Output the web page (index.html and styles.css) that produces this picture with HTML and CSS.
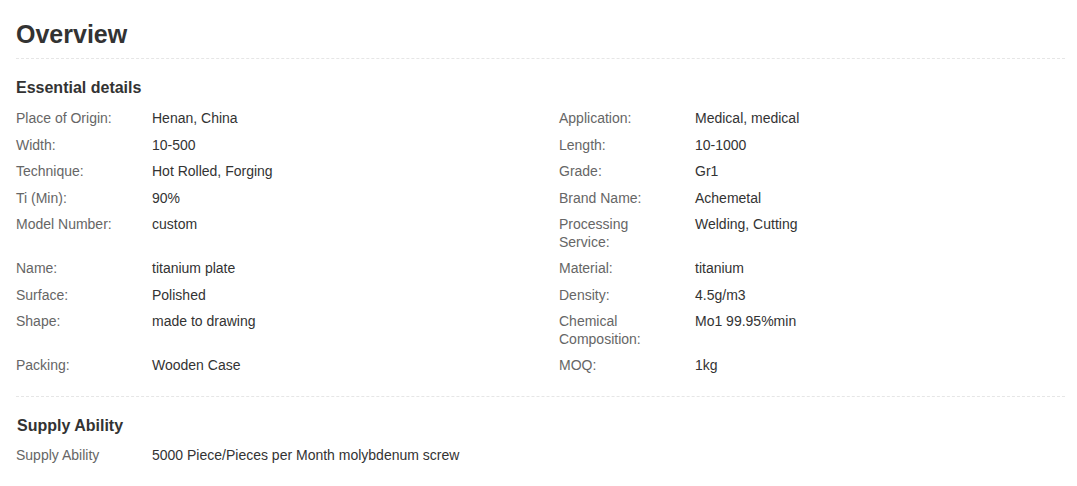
FILE: index.html
```html
<!DOCTYPE html>
<html lang="en">
<head>
<meta charset="utf-8">
<title>Overview</title>
<link rel="stylesheet" href="styles.css">
</head>
<body>
<div class="page">
  <h2 class="title">Overview</h2>
  <section class="block">
    <h3 class="block-title">Essential details</h3>
    <div class="grid">
      <div class="row"><div class="label">Place of Origin:</div><div class="value">Henan, China</div></div>
      <div class="row"><div class="label">Application:</div><div class="value">Medical, medical</div></div>
      <div class="row"><div class="label">Width:</div><div class="value">10-500</div></div>
      <div class="row"><div class="label">Length:</div><div class="value">10-1000</div></div>
      <div class="row"><div class="label">Technique:</div><div class="value">Hot Rolled, Forging</div></div>
      <div class="row"><div class="label">Grade:</div><div class="value">Gr1</div></div>
      <div class="row"><div class="label">Ti (Min):</div><div class="value">90%</div></div>
      <div class="row"><div class="label">Brand Name:</div><div class="value">Achemetal</div></div>
      <div class="row"><div class="label">Model Number:</div><div class="value">custom</div></div>
      <div class="row"><div class="label">Processing Service:</div><div class="value">Welding, Cutting</div></div>
      <div class="row"><div class="label">Name:</div><div class="value">titanium plate</div></div>
      <div class="row"><div class="label">Material:</div><div class="value">titanium</div></div>
      <div class="row"><div class="label">Surface:</div><div class="value">Polished</div></div>
      <div class="row"><div class="label">Density:</div><div class="value">4.5g/m3</div></div>
      <div class="row"><div class="label">Shape:</div><div class="value">made to drawing</div></div>
      <div class="row"><div class="label">Chemical Composition:</div><div class="value">Mo1 99.95%min</div></div>
      <div class="row"><div class="label">Packing:</div><div class="value">Wooden Case</div></div>
      <div class="row"><div class="label">MOQ:</div><div class="value">1kg</div></div>
    </div>
  </section>
  <section class="block block-last">
    <h3 class="block-title block-title-supply">Supply Ability</h3>
    <div class="row"><div class="label">Supply Ability</div><div class="value">5000 Piece/Pieces per Month molybdenum screw</div></div>
  </section>
</div>
</body>
</html>
```
FILE: styles.css
```css
html, body {
  margin: 0;
  padding: 0;
  background: #fff;
}
body {
  font-family: "Liberation Sans", Arial, sans-serif;
  color: #333;
}
.page {
  padding: 20px 12px 0 16px;
}
.title {
  margin: 0;
  font-size: 25px;
  line-height: 29px;
  font-weight: bold;
  color: #333;
  padding-bottom: 9px;
  border-bottom: 1px dashed #e6e6e6;
}
.block {
  padding-top: 19px;
  padding-bottom: 13px;
  border-bottom: 1px dashed #e6e6e6;
}
.block-last {
  border-bottom: none;
  padding-top: 19px;
}
.block-title {
  margin: 0 0 11px;
  font-size: 16px;
  line-height: 20px;
  font-weight: bold;
  color: #333;
}
.block-title-supply {
  margin-left: 1px;
  margin-bottom: 10px;
}
.grid {
  display: grid;
  grid-template-columns: 543px 1fr;
}
.row {
  display: flex;
  font-size: 14px;
  line-height: 18px;
  padding-bottom: 8px;
  min-height: 26.5px;
  box-sizing: border-box;
}
.label {
  width: 110px;
  margin-right: 26px;
  flex: none;
  color: #666;
}
.value {
  color: #333;
}
```
